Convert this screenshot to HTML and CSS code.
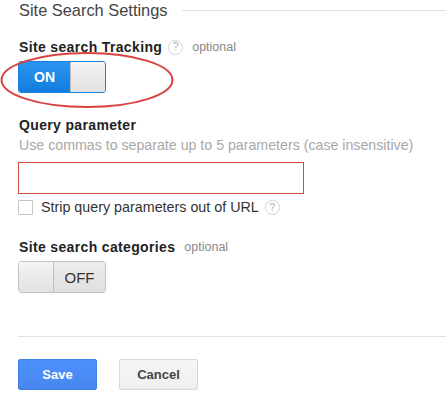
FILE: index.html
```html
<!DOCTYPE html>
<html lang="en">
<head>
    <meta charset="UTF-8">
    <meta name="viewport" content="width=device-width, initial-scale=1.0">
    <title>Site Search Settings</title>
    <link rel="stylesheet" href="styles.css">
</head>
<body>
    <div class="header">
        <h2>Site Search Settings</h2>
        <div class="rule"></div>
    </div>

    <div class="field tracking">
        <div class="label">Site search Tracking <span class="help">?</span> <span class="optional">optional</span></div>
        <div class="toggle on">
            <span class="state">ON</span>
            <span class="knob"></span>
        </div>
        <!-- red annotation ring round the toggle -->
        <svg class="ring" width="176" height="58" viewBox="0 0 176 58">
            <ellipse cx="87" cy="29" rx="85.5" ry="27" fill="none" stroke="#d9433f" stroke-width="2"/>
        </svg>
    </div>

    <div class="field query">
        <div class="label">Query parameter</div>
        <div class="hint">Use commas to separate up to 5 parameters (case insensitive)</div>
        <input type="text" class="text-input">
        <label class="check">
            <span class="box"></span>
            Strip query parameters out of URL <span class="help">?</span>
        </label>
    </div>

    <div class="field categories">
        <div class="label">Site search categories <span class="optional">optional</span></div>
        <div class="toggle off">
            <span class="knob"></span>
            <span class="state">OFF</span>
        </div>
    </div>

    <div class="divider"></div>

    <div class="actions">
        <button class="btn primary">Save</button>
        <button class="btn">Cancel</button>
    </div>
</body>
</html>
```

FILE: styles.css
```css
body {
    font-family: "Liberation Sans", Arial, sans-serif;
    margin: 0;
    padding: 0 0 0 18px;
    color: #222;
    background: #fff;
}

.header {
    display: flex;
    align-items: center;
    height: 20px;
}

.header h2 {
    font-size: 16.4px;
    font-weight: normal;
    color: #444;
    margin: 0 0 0 1px;
    line-height: 20px;
}

.rule {
    flex: 1;
    height: 1px;
    background: #e0e0e0;
    margin-left: 14px;
}

.field {
    position: relative;
}

.label {
    font-size: 14px;
    font-weight: bold;
    color: #222;
    line-height: 16px;
    margin-left: 1px;
    letter-spacing: 0.35px;
    display: flex;
    align-items: center;
}

.optional {
    font-size: 12.5px;
    font-weight: normal;
    color: #888;
    margin-left: 9px;
    letter-spacing: 0;
}

.help {
    display: inline-flex;
    align-items: center;
    justify-content: center;
    width: 13px;
    height: 13px;
    border: 1px solid #d4d4d4;
    border-radius: 50%;
    font-size: 10px;
    font-weight: normal;
    color: #aaa;
    margin-left: 6px;
    letter-spacing: 0;
}

.tracking {
    margin-top: 19px;
}

.toggle {
    display: flex;
    width: 88px;
    height: 32px;
    margin-top: 6px;
    border-radius: 3px;
    overflow: hidden;
    box-sizing: border-box;
    border: 1px solid #c4c4c4;
    font-size: 14px;
}

.toggle .knob {
    width: 34px;
    background: linear-gradient(#f4f4f4, #e2e2e2);
}

.toggle .state {
    flex: 1;
    display: flex;
    align-items: center;
    justify-content: center;
}

.toggle.on {
    border-color: #1580e0;
}

.toggle.on .state {
    background: linear-gradient(#2a95f0, #137de0);
    color: #fff;
    font-weight: bold;
}

.toggle.on .knob {
    border-left: 1px solid #bdbdbd;
}

.toggle.off .knob {
    border-right: 1px solid #bdbdbd;
}

.toggle.off .state {
    background: linear-gradient(#ececec, #e0e0e0);
    color: #333;
    font-size: 15px;
}

.ring {
    position: absolute;
    left: -18px;
    top: 12px;
}

.query {
    margin-top: 24px;
}

.hint {
    font-size: 14.2px;
    color: #a8a8a8;
    margin-top: 4px;
    margin-left: 1px;
    line-height: 17px;
}

.text-input {
    display: block;
    width: 286px;
    height: 32px;
    box-sizing: border-box;
    border: 1px solid #d2493f;
    margin: 8px 0 0 0;
    padding: 0 6px;
    outline: none;
}

.check {
    display: flex;
    align-items: center;
    font-size: 14.3px;
    color: #333;
    margin-top: 5px;
    line-height: 17px;
}

.check .box {
    width: 13px;
    height: 13px;
    border: 1px solid #c6c6c6;
    margin-right: 8px;
    border-radius: 1px;
}

.categories {
    margin-top: 23px;
}

.divider {
    height: 1px;
    background: #e2e2e2;
    margin-top: 43px;
}

.actions {
    display: flex;
    gap: 22px;
    margin-top: 22px;
}

.btn {
    width: 79px;
    height: 31px;
    font-family: inherit;
    font-size: 13px;
    font-weight: bold;
    color: #444;
    background: linear-gradient(#f6f6f6, #efefef);
    border: 1px solid #d8d8d8;
    border-radius: 2px;
    cursor: pointer;
}

.btn.primary {
    color: #fff;
    background: linear-gradient(#4d90fe, #4787ed);
    border-color: #3f7fe6;
}
```
